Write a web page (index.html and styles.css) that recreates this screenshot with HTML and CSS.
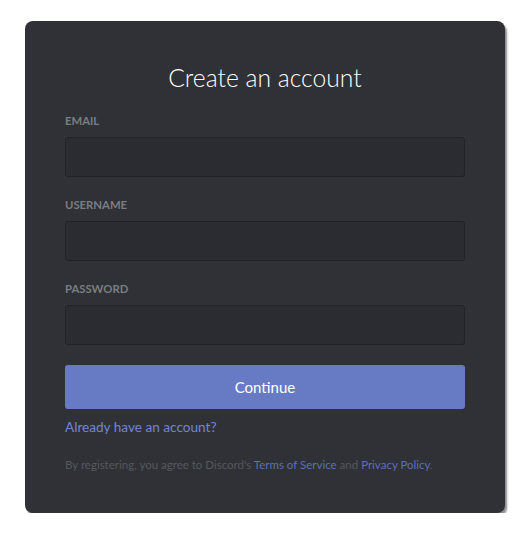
FILE: index.html
```html
<!DOCTYPE html>
<html lang="en">
<head>
    <meta charset="UTF-8">
    <meta name="viewport" content="width=device-width, initial-scale=1.0">
    <title>Create an account</title>
    <link rel="stylesheet" href="styles.css">
</head>
<body>

    <div class="auth-box">
        <h1 class="title">Create an account</h1>

        <div class="field">
            <label class="field-label">Email</label>
            <input class="field-input" type="email">
        </div>
        <div class="field">
            <label class="field-label">Username</label>
            <input class="field-input" type="text">
        </div>
        <div class="field">
            <label class="field-label">Password</label>
            <input class="field-input" type="password">
        </div>

        <button class="continue-btn">Continue</button>

        <a class="login-link" href="#">Already have an account?</a>

        <p class="terms">By registering, you agree to Discord's <a href="#">Terms of Service</a> and <a href="#">Privacy Policy</a>.</p>
    </div>

</body>
</html>
```

FILE: styles.css
```css
body {
    margin: 0;
    background: #fff;
    font-family: Lato, 'Open Sans', Arial, sans-serif;
}

.auth-box {
    box-sizing: border-box;
    width: 480px;
    margin: 21px 0 0 25px;
    padding: 42px 40px 40px;
    background-color: #2f3136;
    border-radius: 8px;
    box-shadow: 2px 3px 2px rgba(0, 0, 0, 0.45);
    display: flex;
    flex-direction: column;
}

.title {
    margin: 0 0 20px;
    text-align: center;
    color: #fff;
    font-size: 24.7px;
    font-weight: 300;
    line-height: 30px;
}

.field {
    display: flex;
    flex-direction: column;
    margin-bottom: 20px;
}

.field-label {
    color: #7a7d83;
    font-size: 11.3px;
    font-weight: 700;
    line-height: 16px;
    text-transform: uppercase;
    margin-bottom: 8px;
}

.field-input {
    box-sizing: border-box;
    height: 40px;
    background-color: #2a2c31;
    border: 1px solid #212226;
    border-radius: 3px;
    outline: none;
}

.continue-btn {
    height: 44px;
    border: none;
    border-radius: 3px;
    background-color: #677bc4;
    color: #fff;
    font-family: inherit;
    font-size: 15px;
    cursor: pointer;
}

.login-link {
    align-self: flex-start;
    margin-top: 10px;
    color: #7086da;
    font-size: 13.6px;
    line-height: 16px;
    text-decoration: none;
}

.terms {
    margin: 22px 0 0;
    color: #55585e;
    font-size: 11.5px;
    line-height: 16px;
}

.terms a {
    color: #5d6fb5;
    text-decoration: none;
}
```
